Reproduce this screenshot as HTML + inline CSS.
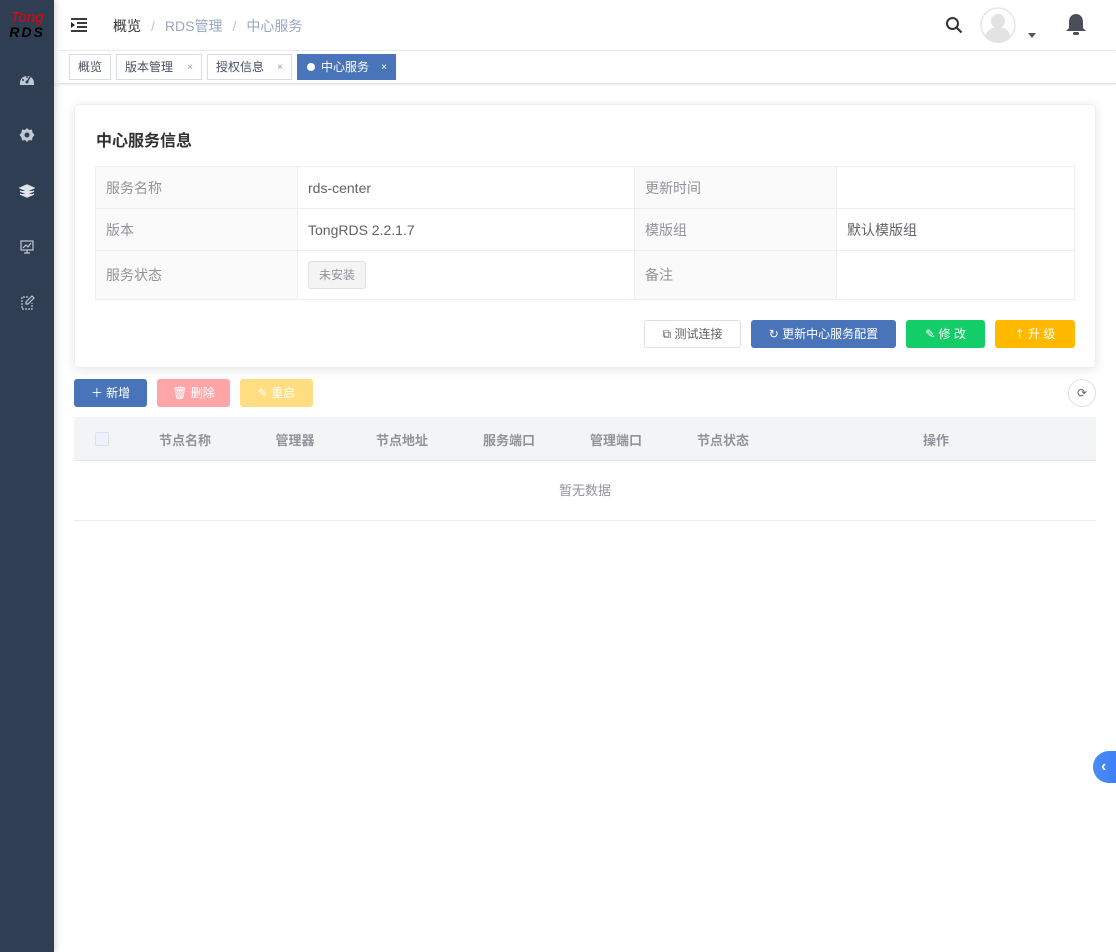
<!DOCTYPE html>
<html><head><meta charset="utf-8"><style>
*{box-sizing:border-box;margin:0;padding:0}
body{width:1116px;height:952px;overflow:hidden;background:#fff;font-family:"Liberation Sans","Noto Sans CJK SC",sans-serif;font-size:14px;color:#606266;position:relative}
.side{position:absolute;left:0;top:0;width:54px;height:952px;background:#2f3e52;box-shadow:2px 0 6px rgba(0,0,0,.15)}
.logo{position:absolute;left:0;top:11px;width:54px;text-align:center;font-style:italic;line-height:14px}
.logo .t{color:#e00;font-size:15px}
.logo .r{color:#000;font-size:14px;font-weight:bold;letter-spacing:2px}
.si{position:absolute;left:19px;width:16px;height:16px}
.hdr{position:absolute;left:54px;top:0;right:0;height:51px;border-bottom:1px solid #eee}
.bc{position:absolute;left:113px;top:16px;font-size:14px;color:#97a8be}
.bc b{font-weight:normal;color:#303133}
.bc i{font-style:normal;margin:0 10px;color:#c0c4cc}
.tags{position:absolute;left:54px;top:51px;right:0;height:33px;border-bottom:1px solid #e4e4e4;box-shadow:0 1px 3px rgba(0,0,0,.08)}
.tag{position:absolute;top:3px;height:26px;border:1px solid #d8dce5;font-size:12px;color:#495060;line-height:24px;padding-left:8px}
.tag .x{position:absolute;right:8px;top:1px;font-size:10px;color:#999}
.card{position:absolute;left:74px;top:104px;width:1022px;height:264px;border:1px solid #ebeef5;border-radius:4px;box-shadow:0 2px 12px rgba(0,0,0,.1)}
.card h3{position:absolute;left:21px;top:22px;font-size:16px;color:#303133;font-weight:bold}
table.d{position:absolute;left:95px;top:166px;border-collapse:collapse;width:980px}
table.d td{border:1px solid #ebeef5;padding:0 10px;font-size:14px;height:42px}
table.d td.l{background:#fafafa;color:#909399}
.btn{position:absolute;height:28px;border-radius:3px;font-size:12px;line-height:28px;text-align:center;color:#fff}
.th{position:absolute;left:74px;top:417px;width:1022px;height:44px;background:#f3f4f6;border-bottom:1px solid #e4e7ed}
.th span{position:absolute;top:13px;font-size:13px;font-weight:bold;color:#909399;transform:translateX(-50%)}
</style></head><body>
<div class="side">
 <div class="logo"><div class="t">Tong</div><div class="r">RDS</div></div>
 <svg class="si" style="top:71px" viewBox="0 0 16 16"><path d="M1 12A7 7 0 0 1 15 12L15 14H1Z" fill="#c0c8d4"/><circle cx="8" cy="11" r="1.5" fill="#2f3e52"/><path d="M8 11L11 6" stroke="#2f3e52" stroke-width="1.5"/><circle cx="4" cy="9" r="1" fill="#2f3e52"/><circle cx="8" cy="6" r="1" fill="#2f3e52"/></svg>
 <svg class="si" style="top:127px" viewBox="0 0 16 16"><path d="M8 1l2 2 3-.5.5 3 2 2.5-2 2.5-.5 3-3-.5L8 15l-2-2-3 .5-.5-3L.5 8l2-2.5.5-3 3 .5z" fill="#c0c8d4"/><circle cx="8" cy="8" r="2.5" fill="#2f3e52"/></svg>
 <svg class="si" style="top:183px" viewBox="0 0 16 16"><path d="M8 2L15 5 8 8 1 5z M1 8l7 3 7-3 M1 11l7 3 7-3" fill="#e0e4ea" stroke="#e0e4ea" stroke-width="1.3"/></svg>
 <svg class="si" style="top:239px" viewBox="0 0 16 16" fill="none" stroke="#c0c8d4" stroke-width="1.2"><rect x="2" y="2" width="12" height="9"/><path d="M8 11v3M5 14h6M4 9l3-3 2 2 3-4"/></svg>
 <svg class="si" style="top:295px" viewBox="0 0 16 16" fill="none" stroke="#c0c8d4" stroke-width="1.2"><path d="M9 2H3v12h10V8" stroke-dasharray="2 1"/><path d="M13 1l2 2-6 6H7V7z"/></svg>
</div>
<div class="hdr">
 <svg style="position:absolute;left:16px;top:17px" width="18" height="16" viewBox="0 0 18 16"><path d="M1 2h16M7 6h10M7 10h10M1 14h16" stroke="#222" stroke-width="1.8"/><path d="M1 5l4 3-4 3z" fill="#222"/></svg>
</div>
<div class="bc"><b>概览</b><i>/</i>RDS管理<i>/</i>中心服务</div>
<svg style="position:absolute;left:945px;top:16px" width="18" height="18" viewBox="0 0 18 18"><circle cx="7.5" cy="7.5" r="5.5" fill="none" stroke="#333" stroke-width="2"/><path d="M11.5 11.5l5 5" stroke="#333" stroke-width="2.2"/></svg>
<svg style="position:absolute;left:980px;top:7px" width="36" height="36" viewBox="0 0 36 36"><circle cx="18" cy="18" r="17" fill="#fff" stroke="#e6e6e6" stroke-width="1.5"/><circle cx="18" cy="14" r="7" fill="#e3e3e3"/><path d="M5 30c2-8 8-10 13-10s11 2 13 10a17 17 0 0 1-26 0z" fill="#e3e3e3"/></svg>
<svg style="position:absolute;left:1028px;top:33px" width="8" height="5"><path d="M0 0h8L4 5z" fill="#555"/></svg>
<svg style="position:absolute;left:1065px;top:12px" width="22" height="26" viewBox="0 0 22 26"><path d="M11 2c4 0 7 3 7 8v6l3 3H1l3-3v-6c0-5 3-8 7-8z" fill="#4a4e58"/><rect x="8" y="20" width="6" height="3" rx="1.5" fill="#4a4e58"/></svg>
<div class="tags"></div>
<div class="tag" style="left:69px;width:42px;top:54px">概览</div>
<div class="tag" style="left:116px;width:86px;top:54px">版本管理<span class="x">×</span></div>
<div class="tag" style="left:207px;width:85px;top:54px">授权信息<span class="x">×</span></div>
<div class="tag" style="left:297px;width:99px;top:54px;background:#4a74b9;border-color:#4a74b9;color:#fff;padding-left:23px"><span style="position:absolute;left:9px;top:8px;width:8px;height:8px;border-radius:50%;background:#fff"></span>中心服务<span class="x" style="color:#fff">×</span></div>
<div class="card"><h3>中心服务信息</h3></div>
<table class="d">
<tr><td class="l" style="width:202px">服务名称</td><td style="width:337px">rds-center</td><td class="l" style="width:202px">更新时间</td><td></td></tr>
<tr><td class="l">版本</td><td>TongRDS 2.2.1.7</td><td class="l">模版组</td><td>默认模版组</td></tr>
<tr><td class="l" style="height:49px">服务状态</td><td><span style="display:inline-block;border:1px solid #e0e0e0;background:#f4f4f5;border-radius:3px;font-size:12px;color:#909399;padding:0 10px;line-height:26px">未安装</span></td><td class="l">备注</td><td></td></tr>
</table>
<div class="btn" style="left:644px;top:320px;width:97px;border:1px solid #dcdfe6;color:#606266;line-height:26px">⧉ 测试连接</div>
<div class="btn" style="left:751px;top:320px;width:145px;background:#4a74b9">↻ 更新中心服务配置</div>
<div class="btn" style="left:906px;top:320px;width:79px;background:#13ce66">✎ 修 改</div>
<div class="btn" style="left:995px;top:320px;width:80px;background:#ffba00">⇡ 升 级</div>
<div class="btn" style="left:74px;top:379px;width:73px;background:#4a74b9">＋ 新增</div>
<div class="btn" style="left:157px;top:379px;width:73px;background:#fea6a7">🗑 删除</div>
<div class="btn" style="left:240px;top:379px;width:73px;background:#ffdd81">✎ 重启</div>
<div style="position:absolute;left:1068px;top:379px;width:28px;height:28px;border:1px solid #dcdfe6;border-radius:50%;text-align:center;line-height:26px;font-size:12px;color:#606266">⟳</div>
<div class="th">
 <div style="position:absolute;left:21px;top:15px;width:14px;height:14px;border:1px solid #dcdfe6;background:#edf2fc;border-radius:2px"></div>
 <span style="left:111px">节点名称</span><span style="left:221px">管理器</span><span style="left:328px">节点地址</span><span style="left:435px">服务端口</span><span style="left:542px">管理端口</span><span style="left:649px">节点状态</span><span style="left:862px">操作</span>
</div>
<div style="position:absolute;left:74px;top:461px;width:1022px;height:60px;border-bottom:1px solid #ebeef5;text-align:center;line-height:60px;font-size:13px;color:#909399">暂无数据</div>
<div style="position:absolute;left:1093px;top:751px;width:30px;height:32px;border-radius:16px 0 0 16px;background:linear-gradient(90deg,#4b8bf7,#3a7cf5);color:#fff;font-weight:bold;line-height:32px;padding-left:8px;font-size:16px">‹</div>
</body></html>
